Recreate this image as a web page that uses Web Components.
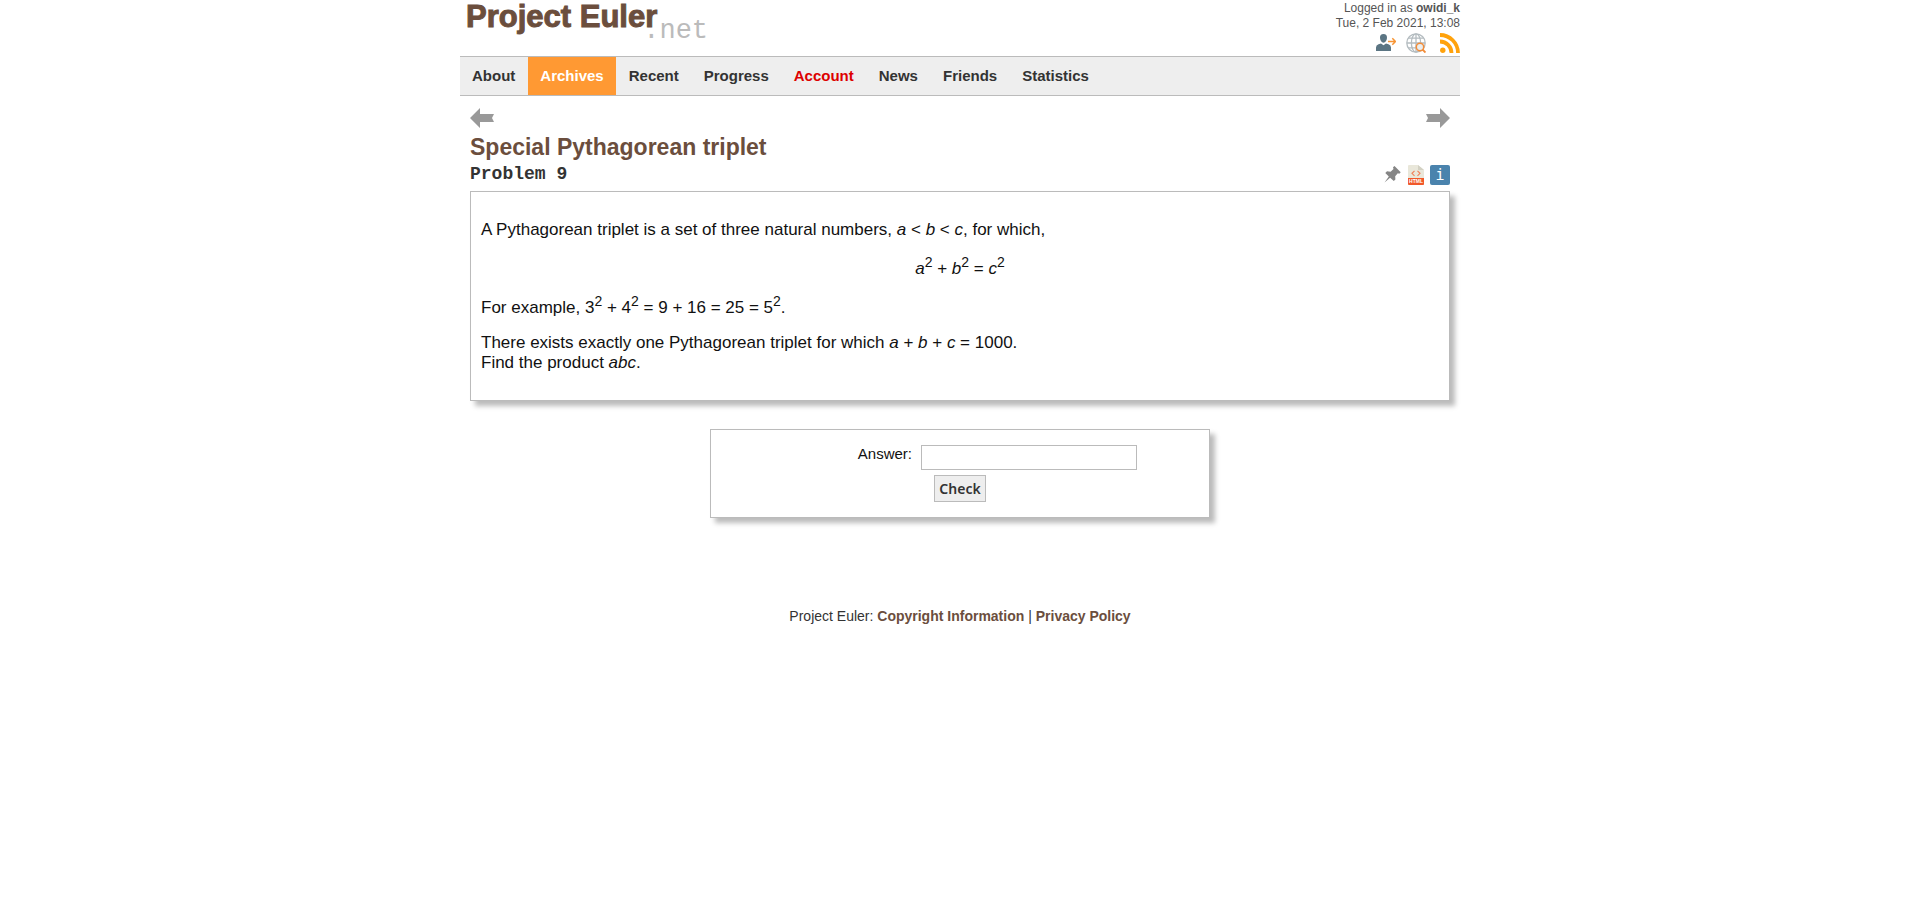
<!DOCTYPE html>
<html lang="en">
<head>
<meta charset="utf-8">
<title>Project Euler - Problem 9</title>
<style>
body { margin: 0; background: #fff; color: #333; font: 16px/20px "Liberation Sans", Arial, sans-serif; }
problem-panel p { margin: 0; }
problem-panel p + p { margin-top: 16px; }
problem-panel p.formula { text-align: center; }
problem-panel sup { font-size: 14px; line-height: 13px; }
</style>
</head>
<body>
<euler-page>
  <site-header slot="header" user="owidi_k" date="Tue, 2 Feb 2021, 13:08"></site-header>
  <site-nav slot="header">
    <nav-item>About</nav-item>
    <nav-item current>Archives</nav-item>
    <nav-item>Recent</nav-item>
    <nav-item>Progress</nav-item>
    <nav-item alert>Account</nav-item>
    <nav-item>News</nav-item>
    <nav-item>Friends</nav-item>
    <nav-item>Statistics</nav-item>
  </site-nav>
  <problem-pager></problem-pager>
  <problem-heading number="9">Special Pythagorean triplet</problem-heading>
  <problem-panel>
    <p>A Pythagorean triplet is a set of three natural numbers, <var>a</var> &lt; <var>b</var> &lt; <var>c</var>, for which,</p>
    <p class="formula"><var>a</var><sup>2</sup> + <var>b</var><sup>2</sup> = <var>c</var><sup>2</sup></p>
    <p>For example, 3<sup>2</sup> + 4<sup>2</sup> = 9 + 16 = 25 = 5<sup>2</sup>.</p>
    <p>There exists exactly one Pythagorean triplet for which <var>a</var> + <var>b</var> + <var>c</var> = 1000.<br>Find the product <var>abc</var>.</p>
  </problem-panel>
  <answer-form></answer-form>
  <site-footer slot="footer"></site-footer>
</euler-page>

<script>
const define = (name, html) => {
  const template = document.createElement('template');
  template.innerHTML = html;
  customElements.define(name, class extends HTMLElement {
    constructor() {
      super();
      this.attachShadow({ mode: 'open' }).append(template.content.cloneNode(true));
    }
    connectedCallback() {
      for (const el of this.shadowRoot.querySelectorAll('[data-attr]')) {
        el.textContent = this.getAttribute(el.dataset.attr);
      }
    }
  });
};

define('euler-page', `
<style>
:host { display: block; max-width: 1000px; margin: 0 auto; }
main { padding: 10px; }
</style>
<slot name="header"></slot>
<main><slot></slot></main>
<slot name="footer"></slot>`);

define('site-header', `
<style>
:host { display: flex; justify-content: space-between; height: 56px; }
.logo { display: flex; align-items: flex-start; padding-left: 6px; text-decoration: none; color: #6b4e3d; font-size: 31px; line-height: 34px; font-weight: bold; -webkit-text-stroke: 1px #6b4e3d; }
.net { margin: 17px 0 0 -14px; font: 27px/28px "Liberation Mono", "Courier New", monospace; color: #bbb; -webkit-text-stroke: 0; }
.info { display: flex; flex-direction: column; align-items: flex-end; padding-top: 1px; font-size: 12px; line-height: 15px; color: #555; }
.icons { display: flex; gap: 10px; margin-top: 2px; }
.icons a:last-child { margin-left: 4px; }
.icons a, svg { display: block; }
</style>
<a class="logo" href="#"><span>Project Euler</span><span class="net">.net</span></a>
<div class="info">
  <div>Logged in as <b data-attr="user"></b></div>
  <div data-attr="date"></div>
  <div class="icons">
    <a href="#" aria-label="Sign out"><svg width="20" height="20" viewBox="0 0 20 20">
      <path d="M7.500 1c2.400 0 3.700 1.600 3.500 4-.2 2.600-1.600 4.700-3.500 4.700S4.200 7.600 4 5c-.2-2.400 1.100-4 3.500-4z" fill="#5b7583"/>
      <path d="M0 18v-3.500Q0 12 2.500 11.300L5 10.600l2.500 1.600 2.500-1.600 2.500.7q2.500.7 2.500 3.200V18z" fill="#5b7583"/>
      <path d="M12 8.500h7M16.300 5.300l3.200 3.200-3.200 3.200" fill="none" stroke="#f79433" stroke-width="1.500"/></svg></a>
    <a href="#" aria-label="Search"><svg width="20" height="20" viewBox="0 0 20 20">
      <g fill="none" stroke="#b4bcc0" stroke-width="1.300"><circle cx="10" cy="10" r="9.200"/><ellipse cx="10" cy="10" rx="4.600" ry="9.200"/><path d="M10 1v18M1 10h18M2.500 5.200h15M2.500 14.800h15"/></g>
      <circle cx="14" cy="14" r="3.700" fill="#e9eef0" stroke="#f28c38" stroke-width="1.500"/><path d="m16.500 16.500 3 3" stroke="#f28c38" stroke-width="1.900"/></svg></a>
    <a href="#" aria-label="RSS feed"><svg width="20" height="20" viewBox="0 0 20 20">
      <circle cx="2.800" cy="17.200" r="2.700" fill="#ffa20c"/><path d="M0 8.500A11.500 11.500 0 0 1 11.500 20M0 2A18 18 0 0 1 18 20" fill="none" stroke="#ffa20c" stroke-width="3.800"/></svg></a>
  </div>
</div>`);

define('site-nav', `
<style>
:host { display: block; background: #eee; border: 1px solid #bbb; border-width: 1px 0; }
nav { display: flex; gap: 1px; }
</style>
<nav aria-label="Main"><slot></slot></nav>`);

define('nav-item', `
<style>
:host { display: block; font-size: 15px; font-weight: bold; color: #333; }
:host([current]) { background: #f93; color: #fff; }
:host([alert]) { color: #d00; }
a { display: block; padding: 0 12px; line-height: 38px; color: inherit; text-decoration: none; }
</style>
<a href="#"><slot></slot></a>`);

define('problem-pager', `
<style>
:host { display: flex; justify-content: space-between; padding-top: 2px; }
a, svg { display: block; }
.next svg { transform: scaleX(-1); }
</style>
<a href="#" aria-label="Previous problem"><svg width="24" height="20" viewBox="0 0 24 20"><path d="M0 10 10 0v6h14l-2 4 2 4H10v6z" fill="#999"/></svg></a>
<a class="next" href="#" aria-label="Next problem"><svg width="24" height="20" viewBox="0 0 24 20"><path d="M0 10 10 0v6h14l-2 4 2 4H10v6z" fill="#999"/></svg></a>`);

define('problem-heading', `
<style>
:host { display: block; padding-top: 6px; }
h2, h3 { margin: 0; }
h2 { margin-bottom: 2px; font-size: 23px; line-height: 26px; color: #6b4e3d; }
.row { display: flex; justify-content: space-between; align-items: flex-start; height: 29px; }
h3 { font: bold 18px/25px "Liberation Mono", "Courier New", monospace; }
.tools { display: flex; gap: 4px; padding-top: 3px; }
.tools a, svg { display: block; }
.about { width: 20px; height: 20px; border-radius: 2px; background: #4a83ad; color: #fff; text-align: center; text-decoration: none; font: 15px/20px "DejaVu Sans Mono", monospace; }
</style>
<h2><slot></slot></h2>
<div class="row">
  <h3>Problem <span data-attr="number"></span></h3>
  <div class="tools">
    <a href="#" aria-label="Pin"><svg width="20" height="20" viewBox="0 0 20 20">
      <path d="M12.500 1 18.700 7.200 17.300 8.800 15.800 8.300 13.200 11.300 13.400 14.500 11.800 16 8.100 12.700 2.500 17.500 6.800 11.400 3.300 8 5 6.300 8.600 6.700 11.500 4 11 2.300z" fill="#858585"/></svg></a>
    <a href="#" aria-label="HTML version"><svg width="20" height="20" viewBox="0 0 20 20">
      <path d="M2 1q0-1 1-1h9l6 5v15H2z" fill="#e9e7da"/><path d="M12 0v5h6z" fill="#d3d1c3"/>
      <path d="M2 13h16v6q0 1-1 1H3q-1 0-1-1z" fill="#f1592a"/>
      <path d="M8.500 5.800 6 8.300l2.500 2.500M11.500 5.800 14 8.300l-2.500 2.500" fill="none" stroke="#f0845c" stroke-width="1.200"/>
      <text x="10" y="18.300" text-anchor="middle" font-family="Liberation Sans" font-size="5" font-weight="bold" fill="#fff">HTML</text></svg></a>
    <a class="about" href="#">i</a>
  </div>
</div>`);

define('problem-panel', `
<style>
:host { display: block; padding: 28px 10px 27px; border: 1px solid #bbb; color: #111; font-size: 17px; box-shadow: 5px 5px 5px #bbb; }
</style>
<slot></slot>`);

define('answer-form', `
<style>
:host { display: block; box-sizing: border-box; width: 500px; max-width: 100%; margin: 28px auto 0; border: 1px solid #bbb; color: #111; box-shadow: 5px 5px 5px #bbb; padding: 15px 10px; font-size: 15px; }
form { display: flex; flex-direction: column; align-items: center; gap: 5px; }
.field { display: flex; align-items: flex-start; gap: 9px; align-self: stretch; }
label { width: 191px; text-align: right; line-height: 18px; }
input { box-sizing: border-box; width: 216px; height: 25px; margin: 0; padding: 2px; border: 1px solid #bbb; background: #fff; }
button { height: 27px; margin: 0; padding: 0 4px; border: 1px solid #bbb; background: #eee; color: #333; font: 600 14px/24px "Noto Sans", sans-serif; }
</style>
<form onsubmit="return false">
  <div class="field"><label for="guess">Answer:</label><input id="guess" type="text"></div>
  <button type="submit">Check</button>
</form>`);

define('site-footer', `
<style>
:host { display: block; margin-top: 78px; text-align: center; font-size: 14px; line-height: 20px; }
a { color: #6b4e3d; font-weight: bold; text-decoration: none; }
</style>
<footer>Project Euler: <a href="#">Copyright Information</a> | <a href="#">Privacy Policy</a></footer>`);
</script>
</body>
</html>
